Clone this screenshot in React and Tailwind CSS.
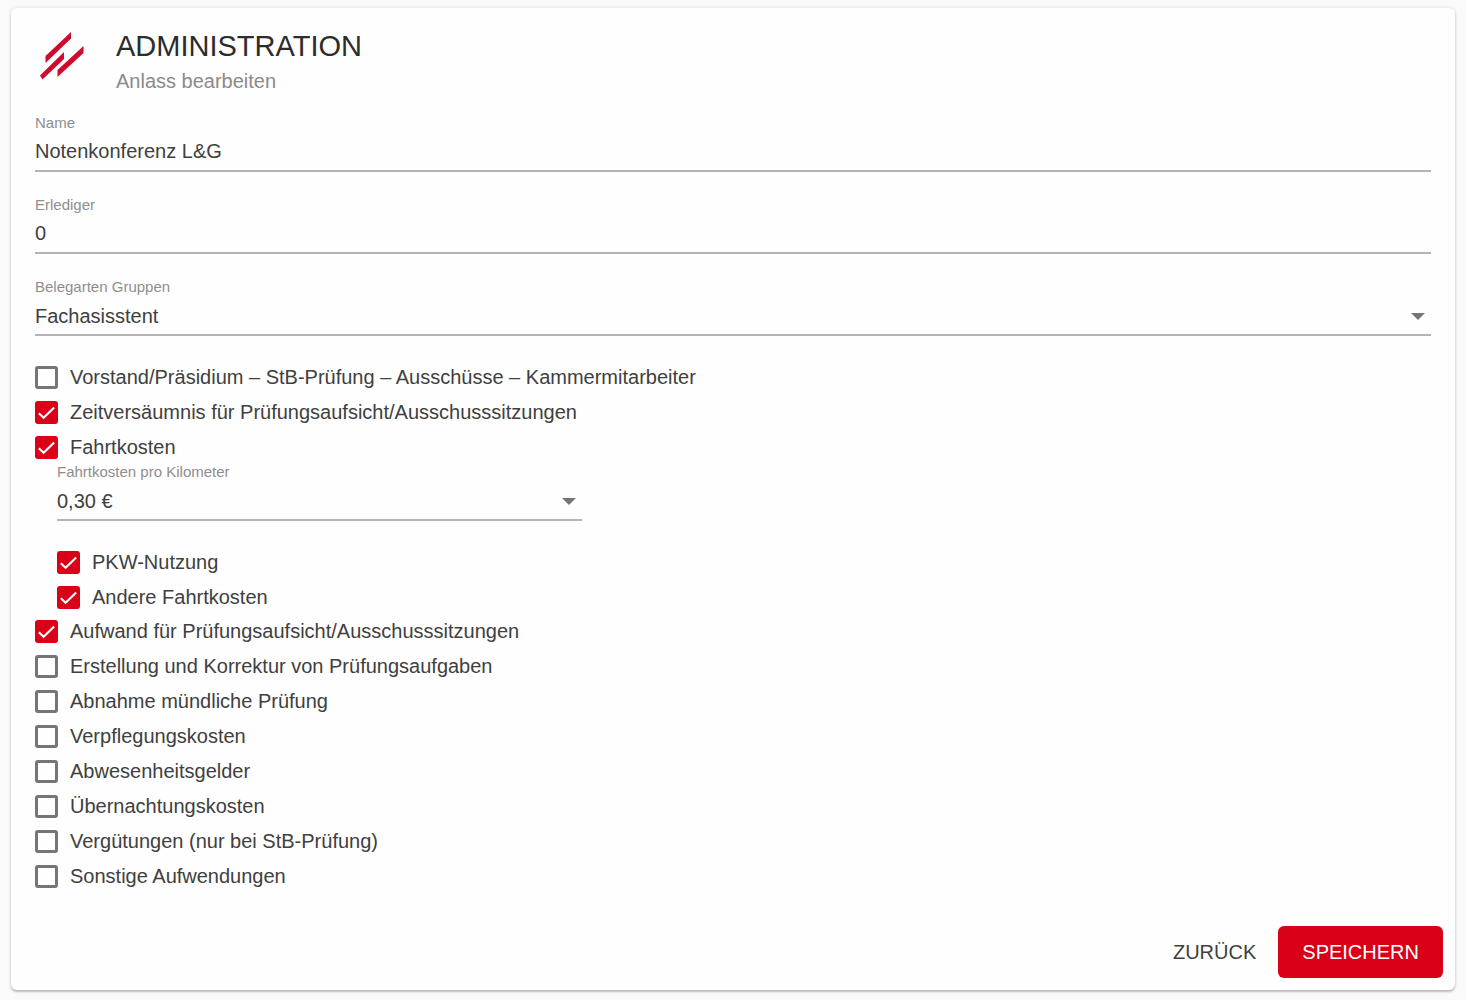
import React, { useState } from 'react';

const GRUPPEN = ['Fachasisstent', 'Vorstand', 'Prüfungsausschuss'];
const KILOMETERSAETZE = ['0,30 €', '0,35 €'];

const AUFWENDUNGEN = [
  { id: 'aufwand', label: 'Aufwand für Prüfungsaufsicht/Ausschusssitzungen', checked: true },
  { id: 'erstellung', label: 'Erstellung und Korrektur von Prüfungsaufgaben' },
  { id: 'abnahme', label: 'Abnahme mündliche Prüfung' },
  { id: 'verpflegung', label: 'Verpflegungskosten' },
  { id: 'abwesenheit', label: 'Abwesenheitsgelder' },
  { id: 'uebernachtung', label: 'Übernachtungskosten' },
  { id: 'verguetungen', label: 'Vergütungen (nur bei StB-Prüfung)' },
  { id: 'sonstige', label: 'Sonstige Aufwendungen' },
];

const Logo = () => (
  <svg viewBox="0 0 44 48" className="h-12 w-11" fill="#d0092f" aria-hidden="true">
    <path d="M5.500 24 31 0v6.500L5.500 31z" />
    <path d="M0 43.500 24 20v7L2.500 47.500z" />
    <path d="M17.500 38 43.500 14v7L17.500 45z" />
  </svg>
);

const TextField = ({ id, label, defaultValue }) => (
  <div className="flex flex-col border-b-2 border-[#b4b4b4]">
    <label htmlFor={id} className="text-[15px] leading-5 text-[#8e8e8e]">{label}</label>
    <input
      id={id}
      defaultValue={defaultValue}
      className="h-[37px] w-full bg-transparent text-[20px] outline-none"
    />
  </div>
);

const SelectField = ({ id, label, options }) => (
  <div className="flex flex-col border-b-2 border-[#b4b4b4]">
    <label htmlFor={id} className="text-[15px] leading-5 text-[#8e8e8e]">{label}</label>
    <div className="relative">
      <select id={id} className="block h-[37px] w-full appearance-none bg-transparent text-[20px] outline-none">
        {options.map((option) => (
          <option key={option}>{option}</option>
        ))}
      </select>
      <svg
        viewBox="0 0 14 7"
        className="pointer-events-none absolute top-4 right-1.5 h-[7px] w-3.5"
        fill="#757575"
        aria-hidden="true"
      >
        <path d="M0 0h14L7 7z" />
      </svg>
    </div>
  </div>
);

const Checkbox = ({ id, label, defaultChecked = false }) => {
  const [checked, setChecked] = useState(defaultChecked);

  return (
    <label htmlFor={id} className="flex w-fit cursor-pointer items-center gap-3 text-[20px] leading-[23px]">
      <span className="grid shrink-0">
        <input
          id={id}
          type="checkbox"
          checked={checked}
          onChange={(e) => setChecked(e.target.checked)}
          className="col-start-1 row-start-1 size-[23px] appearance-none rounded-[3px] border-3 border-[#757575] checked:border-[#d90017] checked:bg-[#d90017]"
        />
        {checked && (
          <svg
            viewBox="0 0 24 24"
            className="pointer-events-none col-start-1 row-start-1 size-[23px]"
            fill="none"
            stroke="#fff"
            strokeWidth="2.2"
            aria-hidden="true"
          >
            <path d="M4 12.800 9 17.500 20 6.800" />
          </svg>
        )}
      </span>
      {label}
    </label>
  );
};

export default function App() {
  return (
    <div className="min-h-screen bg-[#fafafa] px-[11px] pt-2 pb-2.5 font-['Liberation_Sans',Arial,sans-serif] text-[#404040]">
      <form
        onSubmit={(e) => e.preventDefault()}
        className="rounded-md bg-[#fefefe] p-3 shadow-[0_2px_2px_rgba(0,0,0,0.22),0_0_4px_rgba(0,0,0,0.12)]"
      >
        {/* Kopfbereich */}
        <header className="flex gap-8 px-3 pt-2">
          <div className="pt-1 pl-[5px]">
            <Logo />
          </div>
          <div>
            <h1 className="text-[29px] leading-9 text-[#2c2c2c]">ADMINISTRATION</h1>
            <p className="text-[20px] leading-[34px] text-[#8a8a8a]">Anlass bearbeiten</p>
          </div>
        </header>

        {/* Stammdaten */}
        <div className="flex flex-col gap-[23px] px-3 pt-[15px]">
          <TextField id="name" label="Name" defaultValue="Notenkonferenz L&G" />
          <TextField id="erlediger" label="Erlediger" defaultValue="0" />
          <SelectField id="gruppe" label="Belegarten Gruppen" options={GRUPPEN} />
        </div>

        {/* Erlaubte Aufwendungen */}
        <div className="px-3 pt-[30px]">
          <div className="flex flex-col gap-3">
            <Checkbox id="vorstand" label="Vorstand/Präsidium – StB-Prüfung – Ausschüsse – Kammermitarbeiter" />
            <Checkbox id="zeit" label="Zeitversäumnis für Prüfungsaufsicht/Ausschusssitzungen" defaultChecked />
            <Checkbox id="fahrtkosten" label="Fahrtkosten" defaultChecked />
          </div>
          <div className="flex max-w-[547px] flex-col gap-3 pt-[3px] pb-[11px] pl-[22px]">
            <div className="pb-[18px]">
              <SelectField id="kilometer" label="Fahrtkosten pro Kilometer" options={KILOMETERSAETZE} />
            </div>
            <Checkbox id="pkw" label="PKW-Nutzung" defaultChecked />
            <Checkbox id="andere" label="Andere Fahrtkosten" defaultChecked />
          </div>
          <div className="flex flex-col gap-3">
            {AUFWENDUNGEN.map((a) => (
              <Checkbox key={a.id} id={a.id} label={a.label} defaultChecked={a.checked} />
            ))}
          </div>
        </div>

        {/* Aktionen */}
        <div className="flex justify-end pt-[38px]">
          <button type="button" className="h-[52px] cursor-pointer px-[22px] text-[20px]">
            ZURÜCK
          </button>
          <button
            type="submit"
            className="h-[52px] cursor-pointer rounded-md bg-[#d90017] px-6 text-[20px] text-white"
          >
            SPEICHERN
          </button>
        </div>
      </form>
    </div>
  );
}
